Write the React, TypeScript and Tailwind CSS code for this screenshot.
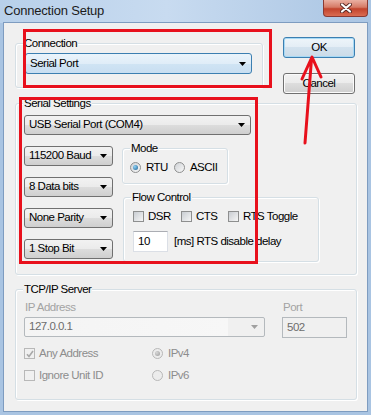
import type { ReactNode } from "react";
import clsx from "clsx";

function GroupBox({
  label,
  className,
  children,
}: {
  label: string;
  className?: string;
  children?: ReactNode;
}) {
  return (
    <div
      className={clsx(
        "relative shrink-0 rounded-[3px] border border-[#d5dfe5] shadow-[inset_1px_1px_0_#ffffff,1px_1px_0_#ffffff]",
        className
      )}
    >
      <span className="absolute -top-[7px] left-[7px] bg-[#f0f0f0] px-[1px] leading-[13px] text-black">
        {label}
      </span>
      {children}
    </div>
  );
}

function Arrow({ color = "#000" }: { color?: string }) {
  return (
    <svg width="7" height="4" viewBox="0 0 7 4" className="shrink-0">
      <path d="M0 0H7L3.5 4Z" fill={color} />
    </svg>
  );
}

function Combo({
  text,
  className,
  hot,
}: {
  text: string;
  className?: string;
  hot?: boolean;
}) {
  return (
    <div
      className={clsx(
        "flex shrink-0 items-center justify-between rounded-[3px] border pl-[4px] pr-[5px]",
        hot
          ? "border-[#3c7fb1] bg-[linear-gradient(#eaf4fb,#e0edf8_50%,#d0e4f4_50%,#c8def1)]"
          : "border-[#707070] bg-[linear-gradient(#f2f2f2,#ebebeb_50%,#dddddd_50%,#cfcfcf)]",
        className
      )}
    >
      <span className="whitespace-nowrap">{text}</span>
      <Arrow />
    </div>
  );
}

function Radio({ checked, disabled }: { checked?: boolean; disabled?: boolean }) {
  return (
    <div
      className={clsx(
        "flex h-[11px] w-[11px] shrink-0 items-center justify-center rounded-full border",
        disabled
          ? "border-[#b8b8b8] bg-[#ececec]"
          : "border-[#8e8f8f] bg-[linear-gradient(135deg,#cfd2d6,#f8f8f8)]"
      )}
    >
      {checked && (
        <div
          className={clsx(
            "h-[5px] w-[5px] rounded-full",
            disabled
              ? "bg-[radial-gradient(circle_at_35%_35%,#d8d8d8,#9a9a9a)]"
              : "bg-[radial-gradient(circle_at_35%_35%,#8fd3f7,#1d5f91)]"
          )}
        />
      )}
    </div>
  );
}

function Check({ checked, disabled }: { checked?: boolean; disabled?: boolean }) {
  return (
    <div
      className={clsx(
        "flex h-[11px] w-[11px] shrink-0 items-center justify-center border",
        disabled
          ? "border-[#b8b8b8] bg-[#f0f0f0]"
          : "border-[#8e8f8f] bg-[linear-gradient(135deg,#c9cdd2,#f6f6f6)]"
      )}
    >
      {checked && (
        <svg width="8" height="8" viewBox="0 0 8 8">
          <path
            d="M1 4.2L3 6.5L7 1"
            fill="none"
            stroke="#a8a8a8"
            strokeWidth="1.6"
          />
        </svg>
      )}
    </div>
  );
}

function Button({ text, primary }: { text: string; primary?: boolean }) {
  return (
    <div
      className={clsx(
        "flex h-[21px] w-[72px] items-center justify-center rounded-[3px] border",
        primary
          ? "border-[#3c7fb1] bg-[linear-gradient(#eef5fa,#e3edf5_50%,#d3e2ee_50%,#cbdbe8)] shadow-[inset_0_0_0_1px_#a7d9f5]"
          : "border-[#707070] bg-[linear-gradient(#f2f2f2,#ebebeb_50%,#dddddd_50%,#cfcfcf)] shadow-[inset_0_0_0_1px_#fbfbfb]"
      )}
    >
      {text}
    </div>
  );
}

export default function App() {
  return (
    <div className="flex h-[415px] w-[371px] flex-col overflow-hidden bg-[#a9c4e2] font-['Liberation_Sans',Arial,sans-serif] text-[11.5px] leading-none tracking-[-0.5px] text-black">
      {/* title bar */}
      <div className="flex h-[23px] shrink-0 items-start justify-between bg-[linear-gradient(90deg,#b8d0ea,#c8dbf0_45%,#aac5e3)]">
        <span className="mt-[3px] ml-[4px] text-[13px] leading-[15px] tracking-[-0.2px] text-[#1b1b1b]">
          Connection Setup
        </span>
        <div className="mr-[3px] flex h-[17px] w-[45px] items-center justify-center rounded-b-[4px] border border-t-0 border-[#8a3a33] bg-[linear-gradient(#eab0a2,#d67a66_45%,#c2432c_55%,#da6c52)]">
          <svg width="12" height="10" viewBox="0 0 12 10">
            <path
              d="M2 1.5L10 8.5M10 1.5L2 8.5"
              stroke="#5a2a25"
              strokeWidth="4"
              strokeLinecap="round"
            />
            <path
              d="M2 1.5L10 8.5M10 1.5L2 8.5"
              stroke="#ffffff"
              strokeWidth="2.2"
              strokeLinecap="round"
            />
          </svg>
        </div>
      </div>

      {/* client area */}
      <div className="relative mx-[4px] mb-[4px] flex flex-1 flex-col bg-[#f0f0f0] pl-[11px] pr-[10px] shadow-[0_0_0_1px_#7e9cc0]">
        <div className="flex items-start pt-[14px]">
          <GroupBox label="Connection" className="mt-[6px] h-[45px] w-[248px] pl-[9px] pt-[9px]">
            <Combo text="Serial Port" hot className="h-[21px] w-[227px]" />
          </GroupBox>
          <div className="ml-[20px] flex flex-col gap-[15px]">
            <Button text="OK" primary />
            <Button text="Cancel" />
          </div>
        </div>

        <GroupBox label="Serial Settings" className="mt-[9px] h-[172px] pl-[8px] pt-[11px]">
          <Combo text="USB Serial Port (COM4)" className="h-[20px] w-[227px]" />
          <div className="mt-[11px] flex items-start">
            <div className="flex w-[89px] flex-col gap-[11px]">
              <Combo text="115200 Baud" className="h-[20px]" />
              <Combo text="8 Data bits" className="h-[20px]" />
              <Combo text="None Parity" className="h-[20px]" />
              <Combo text="1 Stop Bit" className="h-[20px]" />
            </div>
            <div className="ml-[9px] flex flex-col pt-[2px]">
              <GroupBox label="Mode" className="h-[36px] w-[106px] pl-[7px] pt-[13px]">
                <div className="flex h-[11px] items-center">
                  <Radio checked />
                  <span className="ml-[5px]">RTU</span>
                  <div className="ml-[6px]">
                    <Radio />
                  </div>
                  <span className="ml-[5px]">ASCII</span>
                </div>
              </GroupBox>
              <GroupBox label="Flow Control" className="mt-[13px] ml-[1px] h-[65px] w-[196px] pl-[9px] pt-[13px]">
                <div className="flex h-[11px] items-center">
                  <div className="flex w-[48px] items-center gap-[4px]">
                    <Check />
                    <span>DSR</span>
                  </div>
                  <div className="flex w-[47px] items-center gap-[4px]">
                    <Check />
                    <span>CTS</span>
                  </div>
                  <div className="flex items-center gap-[4px]">
                    <Check />
                    <span className="whitespace-nowrap">RTS Toggle</span>
                  </div>
                </div>
                <div className="mt-[9px] flex items-center">
                  <div className="flex h-[21px] w-[35px] items-center border border-[#dbdfe6] border-t-[#abadb3] bg-white pl-[4px]">
                    10
                  </div>
                  <span className="ml-[6px] whitespace-nowrap">[ms] RTS disable delay</span>
                </div>
              </GroupBox>
            </div>
          </div>
        </GroupBox>

        <GroupBox label="TCP/IP Server" className="mt-[14px] h-[111px] pl-[9px] pt-[12px]">
          <div className="flex h-[12px] items-center text-[#a3a3a3]">
            <span className="w-[258px]">IP Address</span>
            <span>Port</span>
          </div>
          <div className="-ml-[1px] mt-[3px] flex items-start text-[#6d6d6d]">
            <div className="flex h-[20px] w-[241px] items-center justify-between rounded-[2px] border border-[#b4b9bd] bg-[linear-gradient(90deg,#f4f4f4,#f7f7f7_85%,#f0f0f0_85%)] pl-[4px] pr-[6px]">
              <span>127.0.0.1</span>
              <Arrow color="#a0a0a0" />
            </div>
            <div className="ml-[17px] flex h-[21px] w-[65px] items-center border border-[#b4b9bd] bg-[#f0f0f0] pl-[4px]">
              502
            </div>
          </div>
          <div className="-ml-[1px] mt-[10px] flex h-[11px] items-center text-[#8d8d8d]">
            <div className="flex w-[128px] items-center gap-[4px]">
              <Check checked disabled />
              <span>Any Address</span>
            </div>
            <div className="flex items-center gap-[5px]">
              <Radio checked disabled />
              <span>IPv4</span>
            </div>
          </div>
          <div className="-ml-[1px] mt-[11px] flex h-[11px] items-center text-[#8d8d8d]">
            <div className="flex w-[128px] items-center gap-[4px]">
              <Check disabled />
              <span>Ignore Unit ID</span>
            </div>
            <div className="flex items-center gap-[5px]">
              <Radio disabled />
              <span>IPv6</span>
            </div>
          </div>
        </GroupBox>

        {/* red annotations drawn over the dialog */}
        <div className="pointer-events-none absolute left-[19px] top-[6px] h-[59px] w-[249px] border-[3px] border-[#e8101c]" />
        <div className="pointer-events-none absolute left-[15px] top-[74px] h-[167px] w-[239px] border-[3px] border-[#e8101c]" />
        <svg
          className="pointer-events-none absolute left-0 top-0"
          width="363"
          height="160"
          viewBox="0 0 363 160"
        >
          <path
            d="M301 120L307.5 36M298 56L308 34L317 54"
            fill="none"
            stroke="#e8101c"
            strokeWidth="3"
            strokeLinecap="round"
            strokeLinejoin="round"
          />
        </svg>
      </div>
    </div>
  );
}
